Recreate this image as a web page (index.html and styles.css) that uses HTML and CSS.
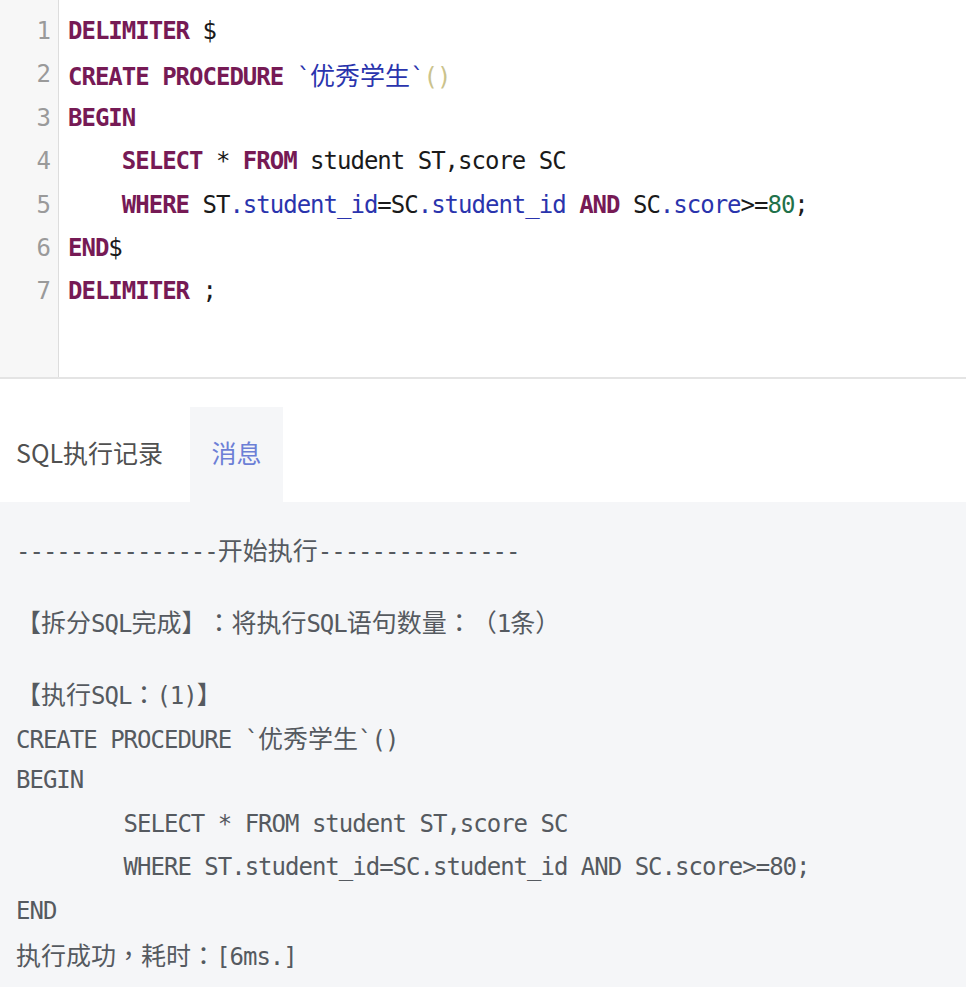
FILE: index.html
```html
<!DOCTYPE html>
<html lang="en">
<head>
<meta charset="utf-8">
<title>SQL</title>
<link rel="stylesheet" href="styles.css">
</head>
<body>
<div class="editor">
  <div class="gutter">
    <div class="ln">1</div>
    <div class="ln">2</div>
    <div class="ln">3</div>
    <div class="ln">4</div>
    <div class="ln">5</div>
    <div class="ln">6</div>
    <div class="ln">7</div>
  </div>
  <div class="code">
<div class="line"><span class="kw">DELIMITER</span> $</div>
<div class="line"><span class="kw">CREATE</span> <span class="kw">PROCEDURE</span> <span class="v2">`<span class="cjk">优秀学生</span>`</span><span class="br">()</span></div>
<div class="line"><span class="kw">BEGIN</span></div>
<div class="line">    <span class="kw">SELECT</span> * <span class="kw">FROM</span> student ST,score SC</div>
<div class="line">    <span class="kw">WHERE</span> ST<span class="v2">.student_id</span>=SC<span class="v2">.student_id</span> <span class="kw">AND</span> SC<span class="v2">.score</span>&gt;=<span class="num">80</span>;</div>
<div class="line"><span class="kw">END</span>$</div>
<div class="line"><span class="kw">DELIMITER</span> ;</div>
  </div>
</div>

<div class="tabs">
  <div class="tab">SQL执行记录</div>
  <div class="tab active">消息</div>
</div>

<div class="panel">
  <div class="block">
<div class="line">---------------<span class="cjk">开始执行</span>---------------</div>
  </div>
  <div class="block">
<div class="line"><span class="cjk">【拆分</span>SQL<span class="cjk">完成】<span class="pu">：</span>将执行</span>SQL<span class="cjk">语句数量<span class="pu">：</span>（</span>1<span class="cjk">条）</span></div>
  </div>
  <div class="block">
<div class="line"><span class="cjk">【执行</span>SQL<span class="cjk pu">：</span>(1)<span class="cjk">】</span></div>
<div class="line">CREATE PROCEDURE `<span class="cjk">优秀学生</span>`()</div>
<div class="line">BEGIN</div>
<div class="line">        SELECT * FROM student ST,score SC</div>
<div class="line">        WHERE ST.student_id=SC.student_id AND SC.score&gt;=80;</div>
<div class="line">END</div>
<div class="line"><span class="cjk">执行成功<span class="pu">，</span>耗时<span class="pu">：</span></span>[6ms.]</div>
  </div>
</div>
</body>
</html>
```

FILE: styles.css
```css
html, body {
  margin: 0;
  padding: 0;
  background: #ffffff;
}

body {
  width: 966px;
  font-family: "DejaVu Sans Mono", "Noto Sans CJK SC", monospace;
  text-spacing-trim: space-all;
}

.editor {
  display: flex;
  height: 377px;
  border-bottom: 2px solid #e4e4e4;
  font-size: 24px;
  letter-spacing: -1px;
  line-height: 43.4px;
}

.gutter {
  width: 50px;
  padding: 10px 8px 0 0;
  background: #f7f7f7;
  border-right: 1px solid #dddddd;
  color: #9a9a9a;
  text-align: right;
}

.code {
  flex: 1;
  padding: 10px 0 0 9px;
  color: #1a1a1a;
}

.line {
  white-space: pre;
  height: 43.4px;
}

.cjk {
  font-family: "Noto Sans CJK SC", sans-serif;
  font-size: 25px;
  letter-spacing: 0;
}

.pu {
  font-family: "Noto Sans CJK TC", "Noto Sans CJK SC", sans-serif;
}

.kw {
  color: #761a55;
  font-weight: bold;
}

.v2 {
  color: #2a34ad;
}

.num {
  color: #21714a;
}

.br {
  color: #cbc38c;
}

.tabs {
  display: flex;
  padding: 28px 0 0 16px;
  font-family: "Noto Sans CJK SC", sans-serif;
  font-size: 25px;
}

.tab {
  height: 95px;
  padding: 0 21px 6px;
  box-sizing: border-box;
  display: flex;
  align-items: center;
  color: #505050;
}

.tab:first-child {
  padding-left: 0;
  padding-right: 27px;
}

.tab.active {
  width: 93px;
  justify-content: center;
  padding: 0 0 6px;
  background: #f5f6f8;
  color: #6c7fd6;
}

.panel {
  background: #f5f6f8;
  padding: 26px 16px 10px;
  color: #555a60;
  font-size: 24px;
  letter-spacing: -1px;
  line-height: 43.5px;
}

.panel .line {
  height: 43.5px;
}

.block + .block {
  margin-top: 28.5px;
}
```
